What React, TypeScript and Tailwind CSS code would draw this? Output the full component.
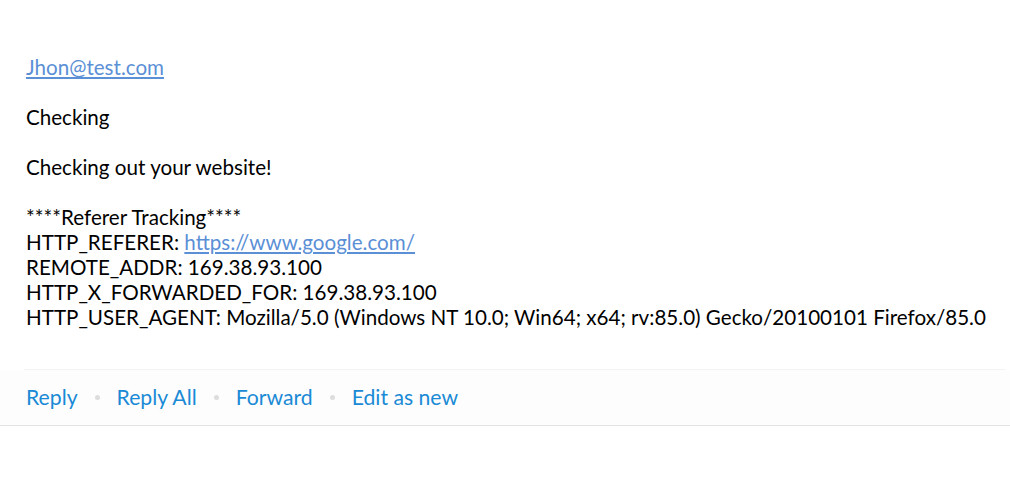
const links = ['Reply', 'Reply All', 'Forward', 'Edit as new'];

export default function App() {
  return (
    <div className="min-h-screen bg-white pt-[55px] font-['Lato',sans-serif] text-[20.6px] leading-[25px] text-black">
      <div className="ml-[24px] mr-[5px] border-b border-[#f4f4f4] pb-[39px] pl-[2px]">
        <a href="#" className="text-[#5b8fd6] underline underline-offset-2">
          Jhon@test.com
        </a>
        <br />
        <br />
        Checking
        <br />
        <br />
        Checking out your website!
        <br />
        <br />
        ****Referer Tracking****
        <br />
        HTTP_REFERER:{' '}
        <a href="#" className="text-[#5b8fd6] underline underline-offset-2">
          https://www.google.com/
        </a>
        <br />
        REMOTE_ADDR: 169.38.93.100
        <br />
        HTTP_X_FORWARDED_FOR: 169.38.93.100
        <br />
        HTTP_USER_AGENT: Mozilla/5.0 (Windows NT 10.0; Win64; x64; rv:85.0) Gecko/20100101 Firefox/85.0
      </div>

      <div className="flex items-center border-b border-[#e3e3e3] bg-[#fdfdfd] px-[26px] py-[15px] text-[21.2px]">
        {links.map((label, i) => (
          <div key={label} className="flex items-center">
            {i > 0 && <span className="mx-[17px] h-[5px] w-[5px] rounded-full bg-[#dddddd]" />}
            <a href="#" className="text-[#1a8ad6]">
              {label}
            </a>
          </div>
        ))}
      </div>
    </div>
  );
}
